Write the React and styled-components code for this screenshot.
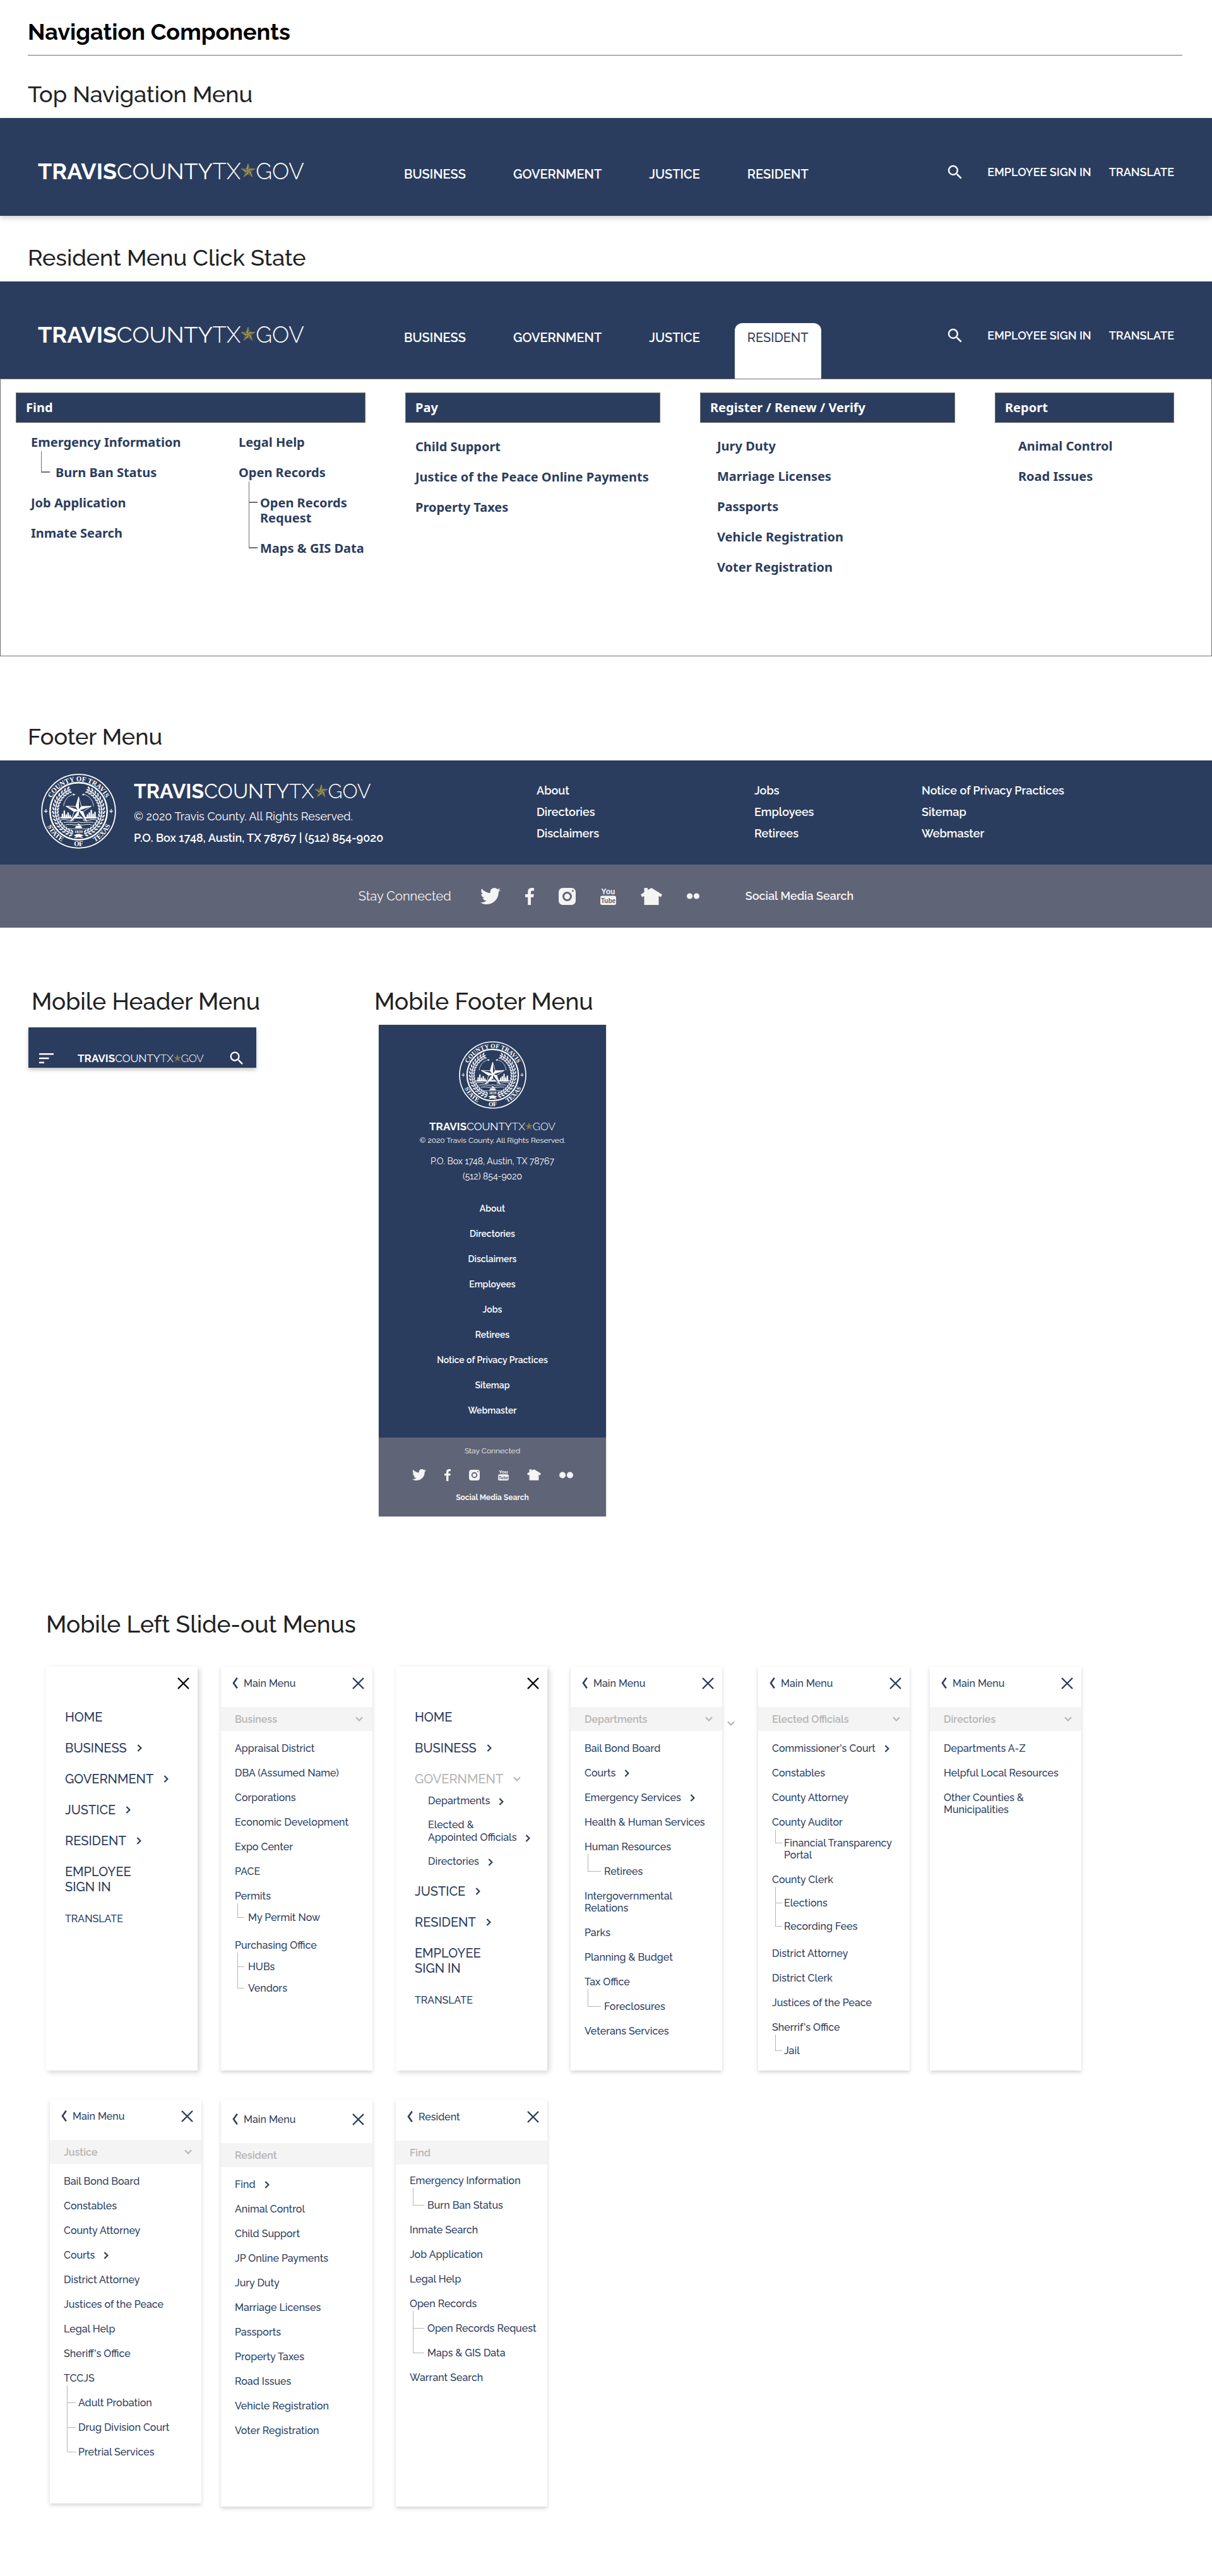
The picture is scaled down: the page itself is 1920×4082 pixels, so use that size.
import React, { useId } from "react";
import styled, { createGlobalStyle, css } from "styled-components";
import { MdSearch } from "react-icons/md";
import { FaTwitter } from "react-icons/fa";

const navy = "#2b3d5e";
const slate = "#606477";
const muted = "#b5b5b5";
const rule = "#707070";
const body = `Raleway, "Open Sans", sans-serif`;
const mega = `"Noto Sans", "Open Sans", sans-serif`;

const GlobalStyle = createGlobalStyle`
  *, *::before, *::after { box-sizing: border-box; }
  body { margin: 0; background: #fff; font-family: ${body}; color: #222; }
  h1, h2, h3, p, ul { margin: 0; padding: 0; }
  ul { list-style: none; }
  a { color: inherit; text-decoration: none; }
  svg { display: block; flex: none; }
  button { font: inherit; color: inherit; background: none; border: 0; padding: 0; cursor: pointer; }
`;

/* ---------- headings ---------- */

const PageHeader = styled.header`
  margin: 0 47px 0 44px;
  padding: 28px 0 15px;
  border-bottom: 1px solid ${rule};
`;

const PageTitle = styled.h1`
  font-size: 36px;
  line-height: 44px;
  font-weight: 700;
  color: #000;
`;

const SectionTitle = styled.h2`
  font-size: ${(p) => (p.$mobile ? 37 : 36)}px;
  line-height: 44px;
  font-weight: 500;
  color: #222;
`;

const Section = styled.section`
  padding-top: ${(p) => p.$top}px;
  > ${SectionTitle} { padding: 0 44px; margin-bottom: 16px; }
`;

/* ---------- logo ---------- */

const LogoLink = styled.a`
  display: flex;
  align-items: center;
  font-size: ${(p) => p.$size}px;
  line-height: ${(p) => p.$line}px;
  color: #fff;
  white-space: nowrap;
  b { font-weight: 700; }
  span { font-weight: 400; }
  i { font-style: normal; font-weight: 300; }
`;

const points = (outer, inner) =>
  Array.from({ length: 10 }, (_, i) => {
    const r = i % 2 ? inner : outer;
    const a = (Math.PI / 5) * i - Math.PI / 2;
    return [r * Math.cos(a), r * Math.sin(a)];
  });

function FacetedStar({ outer, inner, light, dark }) {
  const pts = points(outer, inner);
  return (
    <g>
      {pts.map((p, i) => {
        const n = pts[(i + 1) % 10];
        return (
          <path
            key={i}
            d={`M0 0L${p[0]} ${p[1]}L${n[0]} ${n[1]}Z`}
            fill={i % 2 ? light : dark}
            stroke={light}
            strokeWidth={outer / 24}
            strokeLinejoin="round"
          />
        );
      })}
    </g>
  );
}

function Logo({ size, line }) {
  const star = Math.round(size * 0.68);
  return (
    <LogoLink href="#home" $size={size} $line={line} aria-label="Travis County TX Gov">
      <b>TRAVIS</b>
      <span>COUNTY</span>
      <i>TX</i>
      <svg width={star} height={star} viewBox="-12 -12 24 24" aria-hidden="true">
        <FacetedStar outer={11.5} inner={4.6} light="#a3954a" dark="#4d5157" />
      </svg>
      <i>GOV</i>
    </LogoLink>
  );
}

/* ---------- county seal ---------- */

function Seal({ size }) {
  const id = useId();
  const leaves = [];
  for (let i = 0; i < 17; i += 1) {
    const deg = 24 + i * 8.6;
    const a = (deg * Math.PI) / 180;
    [-1, 1].forEach((side) => {
      [33.4, 37, 40.6].forEach((r, k) => {
        const tilt = side * (deg + (k === 0 ? 60 : k === 1 ? 90 : 122));
        leaves.push(
          <ellipse
            key={`${i}${side}${r}`}
            rx="3"
            ry="1.3"
            fill="#fff"
            opacity="0.9"
            transform={`translate(${side * r * Math.sin(a)} ${-r * Math.cos(a)}) rotate(${tilt - 90 + (side < 0 ? 180 : 0)})`}
          />
        );
      });
    });
  }
  const towers = [
    [-27, 7], [-24, 12], [-21, 6], [-18, 9], [-15, 5], [13, 6], [16, 9], [19, 13], [22, 7], [25, 10],
  ];
  return (
    <svg width={size} height={size} viewBox="-60 -60 120 120" role="img" aria-label="County of Travis, State of Texas seal">
      <defs>
        <path id={`${id}t`} d="M-48 0A48 48 0 0 1 48 0" />
        <path id={`${id}b`} d="M-55.5 0A55.5 55.5 0 0 0 55.5 0" />
      </defs>
      <circle r="58.8" fill="none" stroke="#fff" strokeWidth="1.8" />
      <circle r="45.6" fill="none" stroke="#fff" strokeWidth="2.4" />
      <g fill="#fff" fontFamily="'Liberation Serif', serif" fontWeight="700" fontSize="11" textAnchor="middle">
        <text><textPath href={`#${id}t`} startOffset="50%">COUNTY OF TRAVIS</textPath></text>
        <text><textPath href={`#${id}b`} startOffset="24%">STATE</textPath></text>
        <text><textPath href={`#${id}b`} startOffset="50%">OF</textPath></text>
        <text><textPath href={`#${id}b`} startOffset="76%">TEXAS</textPath></text>
      </g>
      {[-52.2, 52.2].map((x) => (
        <path key={x} d={`M${x} -3.4V3.4M${x - 3} 0H${x + 3}`} stroke="#fff" strokeWidth="1.4" strokeDasharray="2.4 0.8" />
      ))}
      {leaves}
      <path d="M-24 -8C-23 -18 -17 -25 -8 -27M24 -8C23 -18 17 -25 8 -27" fill="none" stroke="#fff" strokeWidth="0.8" />
      <path d="M-9 -28.5L-5 -26.5L-8.4 -25ZM9 -28.5L5 -26.5L8.4 -25Z" fill="#fff" />
      {towers.map(([x, h]) => (
        <path key={x} d={`M${x} 10V${10 - h + 2}L${x + 1.2} ${10 - h}L${x + 2.4} ${10 - h + 2}V10Z`} fill="#fff" />
      ))}
      <path d="M-29 9H29V11.5H-29Z" fill="#fff" />
      <path
        d="M-28 14C-20 11 -14 17 -7 14M28 14C20 11 14 17 7 14M-24 18C-12 16 -6 20 0 17C6 20 12 16 24 18M-21 22C-12 19 -8 24 0 21C8 24 12 19 21 22"
        fill="none"
        stroke="#fff"
        strokeWidth="1"
      />
      <path d="M-6 27L-4 23.5H4L6 27ZM-1 23V19L4 23Z" fill="#fff" />
      <g transform="translate(0 -1.5)">
        <FacetedStar outer={21.5} inner={7.6} light="#fff" dark={navy} />
      </g>
      <path d="M-18 28H18" stroke="#fff" strokeWidth="0.7" />
      <text y="34.5" fill="#fff" fontFamily="'Liberation Serif', serif" fontWeight="700" fontSize="6.5" textAnchor="middle">1839</text>
      <path d="M-8 38L0 36L8 38L4 40.5L8 43L0 41.5L-8 43L-4 40.5Z" fill="#fff" />
    </svg>
  );
}

/* ---------- small icons ---------- */

const Stroke = styled.svg.attrs({ fill: "none", stroke: "currentColor", strokeWidth: 2.2, "aria-hidden": true })``;

const ChevronRight = () => (
  <Stroke width="8" height="12" viewBox="0 0 8 12"><path d="M1.4 1L6.4 6L1.4 11" /></Stroke>
);
const ChevronDown = () => (
  <Stroke width="12" height="8" viewBox="0 0 12 8"><path d="M1 1.2L6 6.4L11 1.2" /></Stroke>
);
const ChevronBack = () => (
  <Stroke width="9" height="18" viewBox="0 0 9 18"><path d="M7.8 0.8L2 9L7.8 17.2" strokeWidth="2.6" /></Stroke>
);
const Cross = () => (
  <Stroke width="19" height="19" viewBox="0 0 19 19"><path d="M1 1L18 18M18 1L1 18" strokeWidth="2.4" /></Stroke>
);
const MenuLines = () => (
  <Stroke width="23" height="16" viewBox="0 0 23 16"><path d="M0 1.3H23M0 8H15.5M0 14.7H8" strokeWidth="2.6" /></Stroke>
);

const Facebook = ({ w }) => (
  <svg width={w} height={Math.round((w * 27) / 14)} viewBox="0 0 14 27" aria-hidden="true">
    <path
      d="M9 27V14.7H13.1L13.7 9.9H9V6.9C9 5.5 9.4 4.6 11.4 4.6H14V0.2C13.5 0.1 12 0 10.3 0C6.7 0 4.2 2.2 4.2 6.2V9.9H0V14.7H4.2V27Z"
      fill="currentColor"
    />
  </svg>
);
const Instagram = ({ w }) => (
  <svg width={w} height={w} viewBox="0 0 27 27" aria-hidden="true">
    <rect width="27" height="27" rx="6.5" fill="currentColor" />
    <circle cx="13.5" cy="13.5" r="6" fill="none" stroke={slate} strokeWidth="3" />
    <circle cx="22.3" cy="4.8" r="1.5" fill={slate} />
  </svg>
);
const YouTube = ({ w }) => (
  <svg width={w} height={Math.round(w * 1.08)} viewBox="0 0 25 27" aria-hidden="true">
    <rect y="12.5" width="25" height="14.5" rx="3" fill="currentColor" />
    <g fontFamily="'Liberation Sans Narrow', 'Liberation Sans', sans-serif" fontWeight="700" textAnchor="middle">
      <text x="12.5" y="10" fontSize="12" fill="currentColor">You</text>
      <text x="12.5" y="23.5" fontSize="10" fill={slate}>Tube</text>
    </g>
  </svg>
);
const House = ({ w }) => (
  <svg width={w} height={Math.round(w * 0.8)} viewBox="0 0 34 27" aria-hidden="true">
    <path d="M5.5 0H11V3.2L17 0L34 10.5L31.8 14.6L28.5 13V27H5.5V13L2.2 14.6L0 10.5L5.5 7Z" fill="currentColor" />
  </svg>
);
const Flickr = ({ w }) => (
  <svg width={w} height={w / 2} viewBox="0 0 20 10" aria-hidden="true">
    <circle cx="4.6" cy="5" r="4.6" fill="currentColor" />
    <circle cx="15.4" cy="5" r="4.6" fill="currentColor" />
  </svg>
);

const SocialList = styled.ul`
  display: flex;
  align-items: center;
  justify-content: center;
  gap: ${(p) => p.$gap}px;
  color: #f4f4f4;
`;

function Socials({ small }) {
  return (
    <SocialList $gap={small ? 29 : 39}>
      <li><a href="#twitter" aria-label="Twitter"><FaTwitter size={small ? 22 : 32} /></a></li>
      <li><a href="#facebook" aria-label="Facebook"><Facebook w={small ? 10 : 14} /></a></li>
      <li><a href="#instagram" aria-label="Instagram"><Instagram w={small ? 17 : 27} /></a></li>
      <li><a href="#youtube" aria-label="YouTube"><YouTube w={small ? 17 : 25} /></a></li>
      <li><a href="#nextdoor" aria-label="Nextdoor"><House w={small ? 22 : 34} /></a></li>
      <li><a href="#flickr" aria-label="Flickr"><Flickr w={small ? 22 : 20} /></a></li>
    </SocialList>
  );
}

/* ---------- top navigation ---------- */

const NavBar = styled.nav`
  display: grid;
  grid-template-columns: 560px 1fr auto;
  height: ${(p) => (p.$open ? 154 : 155)}px;
  padding: 0 60px;
  background: ${navy};
  box-shadow: 0 3px 8px rgba(0, 0, 0, 0.2);
  color: #fff;
`;

const NavLogo = styled.div`
  padding-top: 64px;
`;

const NavMenu = styled.ul`
  display: flex;
  gap: 35px;
  padding-top: 66px;
`;

const NavLink = styled.a`
  display: block;
  height: 100%;
  padding: 11px 20px 0;
  font-size: 20px;
  line-height: 24px;
  font-weight: 600;
  ${(p) => p.$active && css`
    border-radius: 12px 12px 0 0;
    background: #fff;
    color: ${navy};
    font-weight: 500;
  `}
`;

const NavTools = styled.div`
  display: flex;
  align-items: center;
  gap: 28px;
  height: 30px;
  margin-top: 71px;
  font-size: 18px;
  line-height: 24px;
  font-weight: 600;
  button { margin-right: 8px; }
`;

function TopNav({ open }) {
  return (
    <NavBar $open={open} aria-label="Main">
      <NavLogo><Logo size={36} line={40} /></NavLogo>
      <NavMenu>
        {["BUSINESS", "GOVERNMENT", "JUSTICE", "RESIDENT"].map((t) => (
          <li key={t}><NavLink href={`#${t.toLowerCase()}`} $active={open && t === "RESIDENT"}>{t}</NavLink></li>
        ))}
      </NavMenu>
      <NavTools>
        <button type="button" aria-label="Search"><MdSearch size={30} /></button>
        <a href="#signin">EMPLOYEE SIGN IN</a>
        <a href="#translate">TRANSLATE</a>
      </NavTools>
    </NavBar>
  );
}

/* ---------- connector lines for nested lists ---------- */

const TreeList = styled.ul`
  display: flex;
  flex-direction: column;
  gap: ${(p) => p.$t.gap}px;
  margin-left: ${(p) => p.$t.indent}px;
  padding-top: ${(p) => p.$t.gap}px;
  padding-bottom: ${(p) => p.$t.after || 0}px;
  > li { position: relative; }
  > li::before {
    content: "";
    position: absolute;
    left: -${(p) => p.$t.lead}px;
    top: -${(p) => p.$t.gap - 2}px;
    width: ${(p) => p.$t.len}px;
    height: ${(p) => p.$t.gap - 2 + p.$t.mid}px;
    border: solid ${(p) => p.$t.color || muted};
    border-width: 0 0 ${(p) => p.$t.thick || 1}px 1px;
  }
  > li:not(:last-child)::after {
    content: "";
    position: absolute;
    left: -${(p) => p.$t.lead}px;
    top: 0;
    bottom: -${(p) => p.$t.gap}px;
    border-left: 1px solid ${(p) => p.$t.color || muted};
  }
`;

/* ---------- mega menu ---------- */

const MegaPanel = styled.div`
  position: relative;
  display: grid;
  grid-template-columns: 554fr 404fr 404fr 284fr;
  gap: 63px;
  min-height: 440px;
  padding: 21px 59px 21px 24px;
  border: 1px solid ${rule};
  background: #fff;
  font-family: ${mega};
  font-size: 20px;
  line-height: 24px;
  font-weight: 700;
  color: ${navy};
`;

const MegaTitle = styled.h3`
  padding: 0 15px;
  border: 1px solid ${rule};
  background: ${navy};
  color: #fff;
  font-size: 20px;
  line-height: 46px;
  font-weight: 700;
`;

const MegaList = styled.ul`
  display: flex;
  flex-direction: column;
  gap: 24px;
  padding: ${(p) => p.$top || 26}px 0 0 ${(p) => p.$indent}px;
`;

const MegaSplit = styled.div`
  display: grid;
  grid-template-columns: 353fr 201fr;
`;

const megaTree = { gap: 24, len: 14, mid: 12, thick: 2, color: rule };

function MegaItems({ items, ...rest }) {
  return (
    <MegaList {...rest}>
      {items.map((it) => (
        <li key={it.text || it}>
          <a href="#item">{it.text || it}</a>
          {it.subs && (
            <TreeList $t={{ ...megaTree, ...it.tree }}>
              {it.subs.map((s) => <li key={s}><a href="#item">{s}</a></li>)}
            </TreeList>
          )}
        </li>
      ))}
    </MegaList>
  );
}

/* ---------- desktop footer ---------- */

const FooterTop = styled.div`
  display: flex;
  height: 165px;
  padding: 0 60px 0 65px;
  background: ${navy};
  color: #fff;
  font-size: 18px;
  line-height: 24px;
`;

const FooterBrand = styled.div`
  display: flex;
  flex: 0 0 785px;
  gap: 28px;
  > svg { margin-top: 21px; }
  > div { padding-top: 31px; }
`;

const Copyright = styled.p`
  margin-top: 10px;
`;

const Address = styled.p`
  margin-top: 10px;
  font-weight: 600;
`;

const FooterLinks = styled.div`
  display: grid;
  flex: 1;
  grid-template-columns: 345fr 265fr 400fr;
  padding-top: 36px;
  font-weight: 600;
  ul { display: flex; flex-direction: column; gap: 10px; }
`;

const FooterBottom = styled.div`
  display: flex;
  align-items: center;
  justify-content: center;
  height: 100px;
  background: ${slate};
  color: #f4f4f4;
  font-size: 20px;
  line-height: 24px;
  > span { margin-right: 46px; }
  > a { margin-left: 73px; font-size: 18px; font-weight: 600; }
`;

/* ---------- mobile header and footer ---------- */

const MobileRow = styled.section`
  display: flex;
  align-items: flex-start;
  padding: 95px 44px 0 45px;
`;

const MobileColumn = styled.div`
  width: ${(p) => p.$w}px;
`;

const MobileHeader = styled.div`
  display: flex;
  align-items: center;
  justify-content: space-between;
  width: 361px;
  height: 64px;
  margin-top: 19px;
  padding: 34px 17px 0;
  background: ${navy};
  box-shadow: 0 3px 6px rgba(0, 0, 0, 0.25);
  color: #fff;
`;

const HeaderTitle = styled(SectionTitle)`
  padding-left: 5px;
`;

const MobileFooter = styled.footer`
  width: 360px;
  margin: 15px 0 0 7px;
  background: ${navy};
  box-shadow: 0 0 3px rgba(0, 0, 0, 0.2);
  color: #fff;
  text-align: center;
`;

const MobileFooterTop = styled.div`
  display: flex;
  flex-direction: column;
  align-items: center;
  padding: 26px 0 33px;
  font-size: 14px;
  line-height: 24px;
  > a { margin-top: 16px; }
`;

const SmallPrint = styled.p`
  margin-bottom: 11px;
  font-size: 12px;
  line-height: 20px;
`;

const MobileLinks = styled.ul`
  display: flex;
  flex-direction: column;
  gap: 20px;
  margin-top: 29px;
  line-height: 20px;
  font-weight: 600;
`;

const MobileFooterBottom = styled.div`
  padding: 11px 0 20px;
  background: ${slate};
  color: #f4f4f4;
  font-size: 12px;
  line-height: 20px;
  > ul { height: 24px; margin: 16px 0 14px; }
  > a { font-weight: 700; }
`;

/* ---------- slide-out panels ---------- */

const Slides = styled.section`
  padding: 149px 0 110px 73px;
`;

const PanelRow = styled.div`
  display: flex;
  flex-wrap: wrap;
  align-items: flex-start;
  padding: ${(p) => p.$pad};
`;

const Panel = styled.nav`
  width: 240px;
  height: ${(p) => p.$h || 640}px;
  margin-right: ${(p) => p.$gap || 37}px;
  padding-top: ${(p) => p.$top || 0}px;
  background: #fff;
  box-shadow: ${(p) => (p.$main ? "3px 3px 8px" : "0 3px 6px")} rgba(0, 0, 0, 0.17);
  color: ${navy};
  font-size: 16px;
  line-height: 19px;
  font-weight: 500;
`;

const PanelHead = styled.div`
  display: flex;
  align-items: center;
  justify-content: ${(p) => (p.$main ? "flex-end" : "space-between")};
  height: 52px;
  margin-bottom: 12px;
  padding: 0 13px 0 18px;
  color: ${(p) => (p.$main ? "#000" : "inherit")};
`;

const BackButton = styled.button`
  display: flex;
  align-items: center;
  gap: 9px;
`;

const PanelBar = styled.button`
  display: flex;
  align-items: center;
  justify-content: space-between;
  width: 100%;
  height: 38px;
  padding: 0 15px 0 22px;
  background: #f4f4f4;
  color: ${muted};
  font-weight: 600;
`;

const ItemList = styled.ul`
  display: flex;
  flex-direction: column;
  gap: 20px;
  padding: ${(p) => p.$top || 18}px 0 0 22px;
`;

const Item = styled.a`
  display: inline-flex;
  align-items: center;
  gap: 14px;
`;

const StrayChevron = styled.span`
  margin: 86px 37px 0 0;
  color: ${muted};
`;

const MainList = styled.ul`
  display: flex;
  flex-direction: column;
  gap: 25px;
  padding: 4px 0 0 30px;
  font-size: 20px;
  line-height: 24px;
`;

const MainItem = styled.a`
  display: inline-flex;
  align-items: center;
  gap: 16px;
  color: ${(p) => (p.$muted ? muted : "inherit")};
`;

const MainSmall = styled.a`
  font-size: 16px;
`;

const MainSub = styled.ul`
  display: flex;
  flex-direction: column;
  gap: 18px;
  padding: 13px 0 0 21px;
  font-size: 16px;
  line-height: 20px;
`;

const SubItem = styled(Item)`
  align-items: flex-end;
  svg { margin-bottom: 3px; }
`;

const lines = (text) =>
  text.split("\n").map((t, i) => <React.Fragment key={t}>{i > 0 && <br />}{t}</React.Fragment>);

function SlidePanel({ back = "Main Menu", title, bar = true, items, listTop, ...rest }) {
  return (
    <Panel aria-label={title} {...rest}>
      <PanelHead>
        <BackButton type="button"><ChevronBack />{back}</BackButton>
        <button type="button" aria-label="Close"><Cross /></button>
      </PanelHead>
      <PanelBar type="button">{title}{bar && <ChevronDown />}</PanelBar>
      <ItemList $top={listTop}>
        {items.map((it) => {
          const text = it.text || it;
          return (
            <li key={text}>
              <Item href="#item"><span>{lines(text)}</span>{it.more && <ChevronRight />}</Item>
              {it.subs && (
                <TreeList $t={{ mid: 10, ...it.tree }}>
                  {it.subs.map((s) => <li key={s}><a href="#item">{lines(s)}</a></li>)}
                </TreeList>
              )}
            </li>
          );
        })}
      </ItemList>
    </Panel>
  );
}

function MainPanel({ expanded }) {
  return (
    <Panel $main aria-label="Main menu">
      <PanelHead $main><button type="button" aria-label="Close"><Cross /></button></PanelHead>
      <MainList>
        <li><MainItem href="#home">HOME</MainItem></li>
        <li><MainItem href="#business">BUSINESS <ChevronRight /></MainItem></li>
        <li>
          <MainItem href="#government" $muted={expanded}>
            GOVERNMENT {expanded ? <ChevronDown /> : <ChevronRight />}
          </MainItem>
          {expanded && (
            <MainSub>
              <li><SubItem href="#departments">Departments <ChevronRight /></SubItem></li>
              <li><SubItem href="#officials"><span>{lines("Elected &\nAppointed Officials")}</span><ChevronRight /></SubItem></li>
              <li><SubItem href="#directories">Directories <ChevronRight /></SubItem></li>
            </MainSub>
          )}
        </li>
        <li><MainItem href="#justice">JUSTICE <ChevronRight /></MainItem></li>
        <li><MainItem href="#resident">RESIDENT <ChevronRight /></MainItem></li>
        <li><MainItem href="#signin"><span>{lines("EMPLOYEE\nSIGN IN")}</span></MainItem></li>
        <li><MainSmall href="#translate">TRANSLATE</MainSmall></li>
      </MainList>
    </Panel>
  );
}

const businessTree = { indent: 21, lead: 17, len: 11, gap: 15 };
const deptTree = { indent: 31, lead: 26, len: 21, gap: 20 };
const officialTree = { indent: 19, lead: 14, len: 11, gap: 18 };
const justiceTree = { indent: 23, lead: 18, len: 14, gap: 20 };
const findTree = { indent: 28, lead: 23, len: 18, gap: 20 };

const business = [
  "Appraisal District", "DBA (Assumed Name)", "Corporations", "Economic Development", "Expo Center", "PACE",
  { text: "Permits", subs: ["My Permit Now"], tree: { ...businessTree, after: 5 } },
  { text: "Purchasing Office", subs: ["HUBs", "Vendors"], tree: businessTree },
];
const departments = [
  "Bail Bond Board", { text: "Courts", more: true }, { text: "Emergency Services", more: true },
  "Health & Human Services",
  { text: "Human Resources", subs: ["Retirees"], tree: deptTree },
  "Intergovernmental\nRelations", "Parks", "Planning & Budget",
  { text: "Tax Office", subs: ["Foreclosures"], tree: deptTree },
  "Veterans Services",
];
const officials = [
  { text: "Commissioner's Court", more: true }, "Constables", "County Attorney",
  { text: "County Auditor", subs: ["Financial Transparency\nPortal"], tree: { ...officialTree, gap: 14 } },
  { text: "County Clerk", subs: ["Elections", "Recording Fees"], tree: { ...officialTree, after: 4 } },
  "District Attorney", "District Clerk", "Justices of the Peace",
  { text: "Sherrif's Office", subs: ["Jail"], tree: officialTree },
];
const directories = ["Departments A-Z", "Helpful Local Resources", "Other Counties &\nMunicipalities"];
const justice = [
  "Bail Bond Board", "Constables", "County Attorney", { text: "Courts", more: true }, "District Attorney",
  "Justices of the Peace", "Legal Help", "Sheriff's Office",
  { text: "TCCJS", subs: ["Adult Probation", "Drug Division Court", "Pretrial Services"], tree: justiceTree },
];
const resident = [
  { text: "Find", more: true }, "Animal Control", "Child Support", "JP Online Payments", "Jury Duty",
  "Marriage Licenses", "Passports", "Property Taxes", "Road Issues", "Vehicle Registration", "Voter Registration",
];
const find = [
  { text: "Emergency Information", subs: ["Burn Ban Status"], tree: findTree },
  "Inmate Search", "Job Application", "Legal Help",
  { text: "Open Records", subs: ["Open Records Request", "Maps & GIS Data"], tree: findTree },
  "Warrant Search",
];

const footerLinks = [
  ["About", "Directories", "Disclaimers"],
  ["Jobs", "Employees", "Retirees"],
  ["Notice of Privacy Practices", "Sitemap", "Webmaster"],
];
const mobileLinks = [
  "About", "Directories", "Disclaimers", "Employees", "Jobs", "Retirees",
  "Notice of Privacy Practices", "Sitemap", "Webmaster",
];

export default function App() {
  return (
    <>
      <GlobalStyle />
      <PageHeader><PageTitle>Navigation Components</PageTitle></PageHeader>

      <Section $top={39}>
        <SectionTitle>Top Navigation Menu</SectionTitle>
        <TopNav />
      </Section>

      <Section $top={44}>
        <SectionTitle>Resident Menu Click State</SectionTitle>
        <TopNav open />
        <MegaPanel>
          <div>
            <MegaTitle>Find</MegaTitle>
            <MegaSplit>
              <MegaItems
                $top={19}
                $indent={24}
                items={[
                  { text: "Emergency Information", subs: ["Burn Ban Status"], tree: { indent: 39, lead: 23 } },
                  "Job Application", "Inmate Search",
                ]}
              />
              <MegaItems
                $top={19}
                $indent={0}
                items={[
                  "Legal Help",
                  { text: "Open Records", subs: ["Open Records Request", "Maps & GIS Data"], tree: { indent: 34, lead: 18 } },
                ]}
              />
            </MegaSplit>
          </div>
          <div>
            <MegaTitle>Pay</MegaTitle>
            <MegaItems $indent={16} items={["Child Support", "Justice of the Peace Online Payments", "Property Taxes"]} />
          </div>
          <div>
            <MegaTitle>Register / Renew / Verify</MegaTitle>
            <MegaItems
              $indent={27}
              $top={25}
              items={["Jury Duty", "Marriage Licenses", "Passports", "Vehicle Registration", "Voter Registration"]}
            />
          </div>
          <div>
            <MegaTitle>Report</MegaTitle>
            <MegaItems $indent={37} $top={25} items={["Animal Control", "Road Issues"]} />
          </div>
        </MegaPanel>
      </Section>

      <Section $top={105}>
        <SectionTitle>Footer Menu</SectionTitle>
        <footer>
          <FooterTop>
            <FooterBrand>
              <Seal size={119} />
              <div>
                <Logo size={32} line={36} />
                <Copyright>© 2020 Travis County. All Rights Reserved.</Copyright>
                <Address>P.O. Box 1748, Austin, TX 78767 | (512) 854-9020</Address>
              </div>
            </FooterBrand>
            <FooterLinks>
              {footerLinks.map((col) => (
                <ul key={col[0]}>{col.map((t) => <li key={t}><a href="#link">{t}</a></li>)}</ul>
              ))}
            </FooterLinks>
          </FooterTop>
          <FooterBottom>
            <span>Stay Connected</span>
            <Socials />
            <a href="#social">Social Media Search</a>
          </FooterBottom>
        </footer>
      </Section>

      <MobileRow>
        <MobileColumn $w={548}>
          <HeaderTitle $mobile>Mobile Header Menu</HeaderTitle>
          <MobileHeader>
            <button type="button" aria-label="Open menu"><MenuLines /></button>
            <Logo size={17} line={24} />
            <button type="button" aria-label="Search"><MdSearch size={28} /></button>
          </MobileHeader>
        </MobileColumn>
        <MobileColumn $w={367}>
          <SectionTitle $mobile>Mobile Footer Menu</SectionTitle>
          <MobileFooter>
            <MobileFooterTop>
              <Seal size={107} />
              <Logo size={17} line={24} />
              <SmallPrint>© 2020 Travis County. All Rights Reserved.</SmallPrint>
              <p>P.O. Box 1748, Austin, TX 78767</p>
              <p>(512) 854-9020</p>
              <MobileLinks>{mobileLinks.map((t) => <li key={t}><a href="#link">{t}</a></li>)}</MobileLinks>
            </MobileFooterTop>
            <MobileFooterBottom>
              <p>Stay Connected</p>
              <Socials small />
              <a href="#social">Social Media Search</a>
            </MobileFooterBottom>
          </MobileFooter>
        </MobileColumn>
      </MobileRow>

      <Slides>
        <SectionTitle $mobile>Mobile Left Slide-out Menus</SectionTitle>
        <PanelRow $pad="45px 0 0">
          <MainPanel />
          <SlidePanel title="Business" items={business} />
          <MainPanel expanded />
          <SlidePanel title="Departments" items={departments} $gap={8} />
          <StrayChevron><ChevronDown /></StrayChevron>
          <SlidePanel title="Elected Officials" items={officials} $gap={32} />
          <SlidePanel title="Directories" items={directories} />
        </PanelRow>
        <PanelRow $pad="46px 0 0 6px">
          <SlidePanel title="Justice" items={justice} $gap={31} />
          <SlidePanel title="Resident" items={resident} bar={false} $top={5} $h={645} />
          <SlidePanel title="Find" back="Resident" items={find} bar={false} listTop={16} $top={1} $h={645} />
        </PanelRow>
      </Slides>
    </>
  );
}
